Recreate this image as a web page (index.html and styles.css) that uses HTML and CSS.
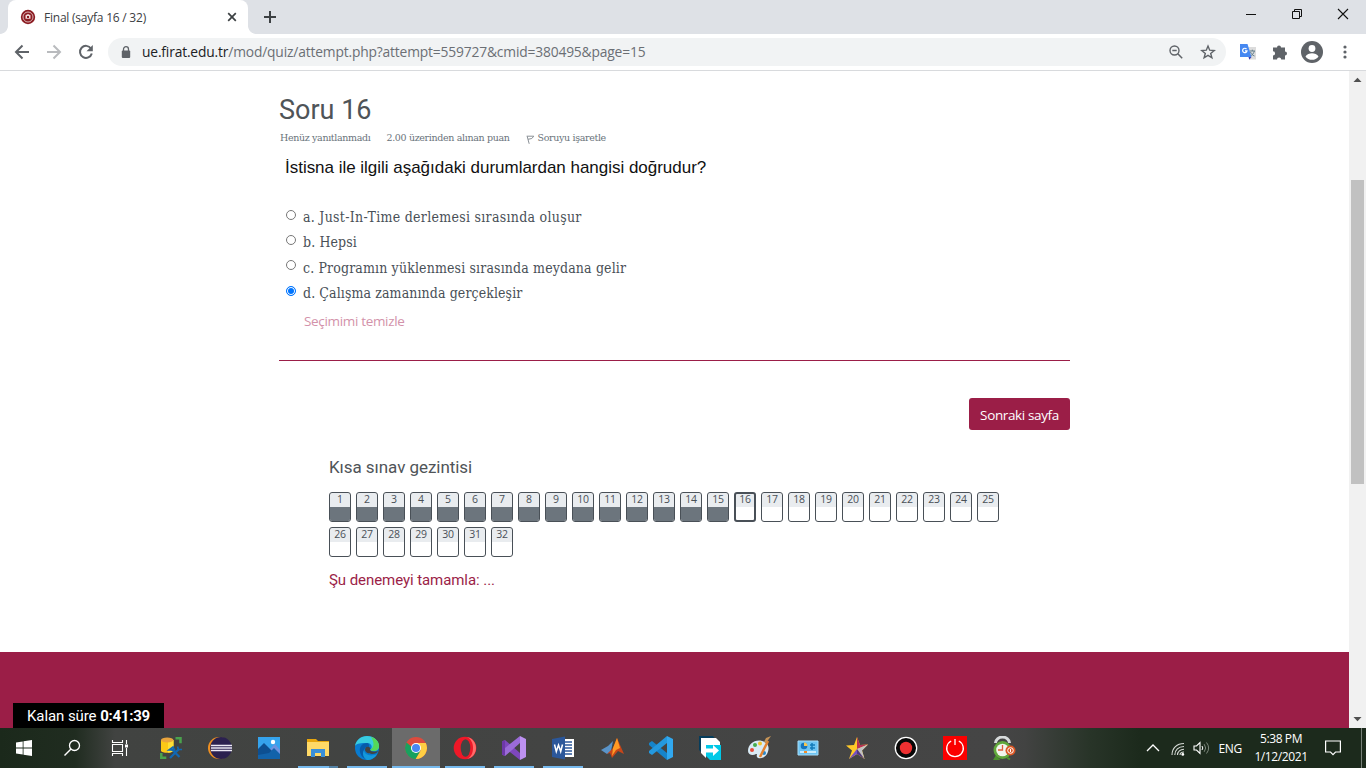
FILE: index.html
```html
<!DOCTYPE html>
<html lang="tr">
<head>
<meta charset="utf-8">
<title>Final (sayfa 16 / 32)</title>
<link rel="stylesheet" href="styles.css">
</head>
<body>
<div class="desktop">
  <header class="tabstrip">
    <div class="tab">
      <svg class="favicon" width="16" height="16" viewBox="0 0 16 16"><circle cx="8" cy="8" r="7.200" fill="#8c1c22"/><circle cx="8" cy="8" r="5" fill="none" stroke="#d9b4b6" stroke-width="1"/><path d="M5.500 6.200L8 5l2.500 1.200v3.500h-5z" fill="#f0dada"/><path d="M7 7h2v2H7z" fill="#8c1c22"/></svg>
      <span class="tab-title">Final (sayfa 16 / 32)</span>
      <svg class="tab-close" width="10" height="10" viewBox="0 0 10 10"><path d="M1.200 1.200l7.600 7.600M8.800 1.200l-7.600 7.600" stroke="#3c4043" stroke-width="1.700"/></svg>
    </div>
    <svg class="new-tab" width="12" height="12" viewBox="0 0 12 12"><path d="M6 0v12M0 6h12" stroke="#3c4043" stroke-width="2"/></svg>
    <div class="window-buttons">
      <svg width="46" height="28" viewBox="0 0 46 28"><path d="M18 14.500h10" stroke="#111"/></svg>
      <svg width="46" height="28" viewBox="0 0 46 28"><path d="M18.500 11.500h7v7h-7zM20.500 11.500v-2h7v7h-2" fill="none" stroke="#111"/></svg>
      <svg width="46" height="28" viewBox="0 0 46 28"><path d="M18 9l10 10M28 9L18 19" stroke="#111" stroke-width="1.100"/></svg>
    </div>
  </header>

  <div class="toolbar">
    <svg class="nav-icon" width="16" height="16" viewBox="0 0 16 16"><path d="M8.500 1.500L2 8l6.500 6.500M2 8h13" fill="none" stroke="#5f6368" stroke-width="2"/></svg>
    <svg class="nav-icon" width="16" height="16" viewBox="0 0 16 16"><path d="M7.500 1.500L14 8l-6.500 6.500M14 8H1" fill="none" stroke="#b9bbbe" stroke-width="2"/></svg>
    <svg class="nav-icon" width="16" height="16" viewBox="0 0 16 16"><path d="M13 4.500A6 6 0 1 0 13.800 9.500" fill="none" stroke="#5f6368" stroke-width="2"/><path d="M14.800 1v6.300H8.500z" fill="#5f6368"/></svg>
    <div class="omnibox">
      <svg width="10" height="12" viewBox="0 0 10 12"><path d="M2.500 5V3.200a2.500 2.500 0 0 1 5 0V5" fill="none" stroke="#5f6368" stroke-width="1.300"/><rect x=".8" y="4.500" width="8.400" height="7.500" rx="1" fill="#5f6368"/></svg>
      <span class="url"><b>ue.firat.edu.tr</b>/mod/quiz/attempt.php?attempt=559727&amp;cmid=380495&amp;page=15</span>
      <svg class="zoom-icon" width="14" height="14" viewBox="0 0 14 14"><circle cx="5.500" cy="5.500" r="4.500" fill="none" stroke="#5f6368" stroke-width="1.400"/><path d="M3.300 5.500h4.400M8.800 8.800l4.400 4.400" stroke="#5f6368" stroke-width="1.500"/></svg>
      <svg class="star-icon" width="16" height="16" viewBox="0 0 16 16"><path d="M8 2l1.700 4.200 4.500.300-3.500 2.900 1.200 4.400L8 11.400l-3.900 2.400 1.200-4.400-3.500-2.900 4.500-.300z" fill="none" stroke="#5f6368" stroke-width="1.400"/></svg>
    </div>
    <svg class="ext-translate" width="16" height="16" viewBox="0 0 16 16"><path d="M7 3h9v12.500h-6z" fill="#dcdcdc"/><path d="M9.500 7h5.500M12.300 5.700V7m2 0c-.6 2.500-2 4-4 5M10.500 8c.8 2 2 3.200 4 4" fill="none" stroke="#607d8b"/><path d="M0 0h7.500l4 13H0z" fill="#4688f1"/><path d="M8.500 13h3l-2.200 2.800z" fill="#3b3fb5"/><path d="M6.500 5A2.200 2.200 0 1 0 7 6.800H5" fill="none" stroke="#fff" stroke-width="1.200"/></svg>
    <svg class="ext-puzzle" width="16" height="16" viewBox="0 0 16 16"><path d="M1 3.500h4a2 2 0 1 1 4 0h4v4a2 2 0 1 1 0 4v4H9.200a2.100 2.100 0 0 0-4.200 0H1v-4a2.100 2.100 0 0 0 0-4.200z" fill="#5f6368"/></svg>
    <svg class="avatar" width="22" height="22" viewBox="0 0 22 22"><circle cx="11" cy="11" r="11" fill="#5f6368"/><circle cx="11" cy="7.500" r="3.400" fill="#fff"/><path d="M4.500 15.500c1.300-2.300 4-3.200 6.500-3.200s5.200.9 6.500 3.200a8 8 0 0 1-13 0z" fill="#fff"/></svg>
    <svg class="menu" width="4" height="14" viewBox="0 0 4 14"><g fill="#5f6368"><circle cx="2" cy="2" r="1.600"/><circle cx="2" cy="7" r="1.600"/><circle cx="2" cy="12" r="1.600"/></g></svg>
  </div>

  <div class="viewport">
    <main class="page">
      <section class="question">
        <h1 class="q-title">Soru 16</h1>
        <div class="q-info">
          <span class="state">Henüz yanıtlanmadı</span>
          <span class="grade">2.00 üzerinden alınan puan</span>
          <svg width="9" height="9" viewBox="0 0 9 9"><path d="M1 .800l2.200 8M1.200 1.200h6.600L5.800 3.500 2 4.300" fill="none" stroke="#8a9096"/></svg>
          <span class="flag">Soruyu işaretle</span>
        </div>
        <p class="q-text">İstisna ile ilgili aşağıdaki durumlardan hangisi doğrudur?</p>
        <div class="answers">
          <label class="answer"><i class="radio"></i><span class="a1">a. Just-In-Time derlemesi sırasında oluşur</span></label>
          <label class="answer"><i class="radio"></i><span class="a2">b. Hepsi</span></label>
          <label class="answer"><i class="radio"></i><span class="a3">c. Programın yüklenmesi sırasında meydana gelir</span></label>
          <label class="answer"><i class="radio checked"></i><span class="a4">d. Çalışma zamanında gerçekleşir</span></label>
        </div>
        <a class="clear">Seçimimi temizle</a>
      </section>
      <div class="actions"><button class="next">Sonraki sayfa</button></div>
      <nav class="quiz-nav">
        <h2 class="nav-title">Kısa sınav gezintisi</h2>
        <div class="cells">
          <a class="cell done">1</a><a class="cell done">2</a><a class="cell done">3</a><a class="cell done">4</a><a class="cell done">5</a><a class="cell done">6</a><a class="cell done">7</a><a class="cell done">8</a><a class="cell done">9</a><a class="cell done">10</a><a class="cell done">11</a><a class="cell done">12</a><a class="cell done">13</a><a class="cell done">14</a><a class="cell done">15</a><a class="cell current">16</a><a class="cell">17</a><a class="cell">18</a><a class="cell">19</a><a class="cell">20</a><a class="cell">21</a><a class="cell">22</a><a class="cell">23</a><a class="cell">24</a><a class="cell">25</a><a class="cell">26</a><a class="cell">27</a><a class="cell">28</a><a class="cell">29</a><a class="cell">30</a><a class="cell">31</a><a class="cell">32</a>
        </div>
        <a class="finish">Şu denemeyi tamamla: ...</a>
      </nav>
      <footer class="footer"><div class="timer">Kalan süre <b>0:41:39</b></div></footer>
    </main>
    <div class="scrollbar">
      <svg width="17" height="17" viewBox="0 0 17 17"><path d="M4.500 11h8L8.500 6.700z" fill="#505050"/></svg>
      <div class="thumb"></div>
      <svg width="17" height="17" viewBox="0 0 17 17"><path d="M4.500 6h8l-4 4.300z" fill="#505050"/></svg>
    </div>
  </div>

  <div class="taskbar">
    <div class="system">
      <svg width="16" height="16" viewBox="0 0 16 16"><path d="M0 2.400l6.700-1v6.200H0zM7.500 1.200L16 0v7.600H7.500zM0 8.400h6.700v6.200l-6.700-1zM7.500 8.400H16V16l-8.500-1.200z" fill="#fff"/></svg>
      <svg width="18" height="18" viewBox="0 0 18 18"><circle cx="11.500" cy="6.500" r="5" fill="none" stroke="#fff" stroke-width="1.300"/><path d="M8 10l-6.500 6.500" stroke="#fff" stroke-width="1.400"/></svg>
      <svg width="18" height="18" viewBox="0 0 18 18"><path d="M1.500 1v2.500h10V1M1.500 17v-2.500h10V17M1.500 5.500h10v7h-10zM15.500 1v4M15.500 9v8" fill="none" stroke="#fff" stroke-width="1.100"/><path d="M14 5.500h3v3h-3z" fill="#fff"/></svg>
    </div>
    <div class="apps">
      <div class="app"><svg width="24" height="24" viewBox="0 0 24 24"><path d="M2 4v11c1 2.300 10.500 2.500 12.500 0V4z" fill="#fbc816"/><path d="M9 4v12.500c3 0 5-.7 5.500-1.500V4z" fill="#ffdf35"/><ellipse cx="8.200" cy="4" rx="6.200" ry="2.500" fill="#e9a43d"/><path d="M16.500 2.300h5v5M2.300 17v4.700h5" fill="none" stroke="#4aa24d" stroke-width="2.500"/><path d="M12.500 13l8 8M11 22l9-9" stroke="#1168b3" stroke-width="2.200"/><path d="M10 14l4-3 1.500 3zM18.500 10.500l1 3 3.500 0" fill="none" stroke="#1168b3" stroke-width="1.700"/></svg></div>
      <div class="app"><svg width="24" height="24" viewBox="0 0 24 24"><circle cx="11" cy="12" r="11" fill="#ef9021"/><circle cx="13" cy="12" r="10.900" fill="#2b2150"/><path d="M3 9.500h21M3 12h21M3 14.500h21" stroke="#ece9f5" stroke-width="1.500"/></svg></div>
      <div class="app"><svg width="24" height="24" viewBox="0 0 24 24"><path d="M1 1h22v22H1z" fill="#35a3ed"/><path d="M12 14l6-6 5 6v8H12z" fill="#6e92df"/><path d="M1 13l6-6 16 16H1z" fill="#0d4f91"/><path d="M12 17l5-5 6 6v5H1v-4z" fill="#1262aa"/><circle cx="16" cy="6" r="2.200" fill="#fff"/></svg></div>
      <div class="app running grouped"><svg width="24" height="24" viewBox="0 0 24 24"><path d="M1 3h9l2 2h11v15H1z" fill="#e8a60d"/><path d="M1 6h22v14H1z" fill="#ffd967"/><path d="M5 13h14v8h-4v-4H9v4H5z" fill="#3a8fd8"/></svg></div>
      <div class="app running"><svg width="24" height="24" viewBox="0 0 24 24"><circle cx="12" cy="12" r="12" fill="#087bd0"/><path d="M0 10C1 4 6 0 12 0c7 0 12 5 12 10 0 5-5 6-9 4 3-2 2-7-3-7-6 0-10 0-12 3z" fill="#38cce0"/><path d="M16 1c5 1 8 5 8 9 0 5-5 6-9 4 5-3 4-8 1-13z" fill="#55d957"/><path d="M12 7c-5 0-8 4-7 9s5 8 10 7c-4-1-7-6-6-9s3-4 5-3c0-2 0-4-2-4z" fill="#075baa"/><path d="M9 14c0 5 7 7 13 4-2 4-6 6-10 6-4-2-5-7-3-10z" fill="#1499dc"/><path d="M10 14c0-3 2-4 4-3 2 1 1 2 1 3 1 2 5 2 8 1-1 4-12 4-13-1z" fill="#434343"/></svg></div>
      <div class="app active"><svg width="22" height="22" viewBox="0 0 22 22"><circle cx="11" cy="11" r="11" fill="#dd4b3e"/><path d="M1.500 5.500A11 11 0 0 0 10.700 22l5-8.500H11z" fill="#18a15f"/><path d="M11 6h9.800A11 11 0 0 1 10.700 22l5-8.500z" fill="#ffce43"/><circle cx="11" cy="11" r="5" fill="#fff"/><circle cx="11" cy="11" r="4" fill="#4988f2"/></svg></div>
      <div class="app running"><svg width="24" height="24" viewBox="0 0 24 24"><circle cx="12" cy="12" r="11.300" fill="#ef1828"/><path d="M14 1c5 1 9 5 9 11s-4 10-9 11c4-2 6-6 6-11s-2-9-6-11z" fill="#ff6b69"/><ellipse cx="12.500" cy="12" rx="4.800" ry="8.700" fill="#464342"/></svg></div>
      <div class="app running"><svg width="24" height="24" viewBox="0 0 24 24"><path d="M0 5.500L3 4l15 13v7L3 12v5l-3 1.500z" fill="#7e47bd"/><path d="M0 18.500l3 1.500L18 7V0L3 12v5z" fill="#9b6bd8"/><path d="M0 5.500L3 4v16l-3-1.500z" fill="#6d38a8"/><path d="M18 0l6 3v18l-6 3z" fill="#bd91f1"/></svg></div>
      <div class="app running"><svg width="24" height="24" viewBox="0 0 24 24"><path d="M11 3h12v18H11z" fill="#fff"/><path d="M14 6h7M14 9h7M14 12h7M14 15h7M14 18h7" stroke="#2b579a" stroke-width="1.300"/><path d="M1 3l13-2.500v23L1 21z" fill="#2b579a"/><path d="M3.500 8.500l1.800 7L7.500 9l2.200 6.500 1.800-7" fill="none" stroke="#fff" stroke-width="1.500"/></svg></div>
      <div class="app"><svg width="24" height="24" viewBox="0 0 24 24"><path d="M1 14l7-4 5-5-2 10-4 3z" fill="#5a94c9"/><path d="M7 18l6-6 4-10 7 16-6-3-6 7-2-5z" fill="#c74619"/><path d="M17 2l-4 10-1 8 4-6 4-2z" fill="#ff9b24"/></svg></div>
      <div class="app"><svg width="24" height="24" viewBox="0 0 24 24"><path d="M0 7l3-2 15 12v7L0 9z" fill="#1684ca"/><path d="M0 17l3 2L18 7V0L0 15z" fill="#2499df"/><path d="M18 0l6 3v18l-6 3z" fill="#31a8ef"/></svg></div>
      <div class="app"><svg width="24" height="24" viewBox="0 0 24 24"><path d="M1 0h14l3 4H5v14l-4-4z" fill="#063d5c"/><path d="M3 2h15l4 4v6H8v10l-5-5z" fill="#fff"/><path d="M8 9h15v15H12l-4-4z" fill="#00c8e7"/><path d="M8 12.500h7V9l6 5.500-6 5.500v-3.500H8z" fill="#fff"/></svg></div>
      <div class="app"><svg width="24" height="24" viewBox="0 0 24 24"><path d="M1 15C1 8 8 3 15 5s8 7 5 13c-3 5-9 5-10 3s1-3-1-3c-3 2-8 1-8-3z" fill="#d9ebf5"/><circle cx="5" cy="14" r="2" fill="#e74b38"/><circle cx="8" cy="9" r="2" fill="#45ad4c"/><circle cx="13" cy="7.500" r="2" fill="#f2c22b"/><circle cx="17" cy="17" r="2" fill="#2988ca"/><path d="M21 5l-8 16" stroke="#e48330" stroke-width="2.500"/><path d="M19 7l5-7-5 2-2 4z" fill="#c69457"/></svg></div>
      <div class="app"><svg width="24" height="24" viewBox="0 0 24 24"><path d="M2 5h20v14H2z" fill="#6dc4f3" stroke="#a5dcf8"/><circle cx="8" cy="10" r="3.300" fill="#1674bc"/><path d="M8 10V6.500a3.500 3.500 0 0 1 3.500 3.500z" fill="#f5c451"/><path d="M14 9h5M14 12h5M16 7v7" stroke="#147bb9" stroke-width="1.500"/><path d="M4 16h16" stroke="#e9faff" stroke-width="1.500"/><path d="M8 16h3" stroke="#f28c28" stroke-width="2"/></svg></div>
      <div class="app"><svg width="24" height="24" viewBox="0 0 24 24"><path d="M12 1l3 8 8-.5-6 6 2.500 8.500-7.500-5L4 23l3-8.500-6-5 8-.5z" fill="#ffc928"/><path d="M12 1l3 8 8-.5L12 13z" fill="#b83255"/><path d="M23 8.500l-6 6 2.500 8.500L12 13z" fill="#c1c1c5"/><path d="M4 23l8-10v5z" fill="#7550c2"/><path d="M12 13v5l7.500 5z" fill="#4c3785"/></svg></div>
      <div class="app"><svg width="24" height="24" viewBox="0 0 24 24"><circle cx="12" cy="12" r="10.700" fill="#080808" stroke="#fff" stroke-width="1.300"/><circle cx="12" cy="12" r="6.200" fill="#ee3031"/></svg></div>
      <div class="app"><svg width="24" height="24" viewBox="0 0 24 24"><path d="M0 0h24v24H0z" fill="#fb0000"/><path d="M8.200 5a8.300 8.300 0 1 0 7.600 0M12 3v6" fill="none" stroke="#fff" stroke-width="1.300"/></svg></div>
      <div class="app"><svg width="24" height="24" viewBox="0 0 24 24"><path d="M3.500 7a6.500 5.500 0 0 1 14 0" fill="none" stroke="#d7dadb" stroke-width="3"/><circle cx="10.500" cy="14" r="9" fill="#62a83b"/><circle cx="10.500" cy="14" r="6.300" fill="#f3f5ec"/><path d="M10.500 9v5H6" fill="none" stroke="#df5d3c" stroke-width="1.300"/><path d="M4 21l-1.500 2.500h4zM15 21.500l3 2" stroke="#4c912d" stroke-width="2"/><circle cx="18.500" cy="14.500" r="5" fill="#db5725"/><circle cx="18.500" cy="14.500" r="2.800" fill="none" stroke="#fff"/><path d="M18.500 13v3" stroke="#fff"/></svg></div>
    </div>
    <div class="tray">
      <svg class="chevron" width="14" height="8" viewBox="0 0 14 8"><path d="M1 7l6-6 6 6" fill="none" stroke="#fff" stroke-width="1.300"/></svg>
      <svg class="wifi" width="14" height="14" viewBox="0 0 14 14"><g fill="none" stroke="#d7dcd7" stroke-width="1.100"><path d="M1 13C1 6 6 1.500 13 1.500M3.800 13C3.800 8 7.500 4.500 13 4.500M6.500 13c0-3.200 2.700-5.700 6.500-5.700M9 13c0-1.800 1.500-3 4-3"/></g><circle cx="11.800" cy="12.400" r="1.400" fill="#fff"/></svg>
      <svg class="volume" width="17" height="14" viewBox="0 0 17 14"><path d="M1 5h2.500L7 1.500v11L3.500 9H1z" fill="none" stroke="#fff" stroke-width="1.100"/><path d="M9 5q1.600 2 0 4" fill="none" stroke="#fff"/><path d="M11.200 3.200q3 3.800 0 7.600M13.500 1.500q4.300 5.500 0 11" fill="none" stroke="#7c877c"/></svg>
      <span class="lang">ENG</span>
      <div class="clock"><span class="time">5:38 PM</span><span class="date">1/12/2021</span></div>
      <svg class="notify" width="16" height="16" viewBox="0 0 16 16"><path d="M.600 1h14.800v11H10.500L8 14.700 5.500 12H.600z" fill="none" stroke="#fff" stroke-width="1.200"/></svg>
      <div class="peek"></div>
    </div>
  </div>
</div>
</body>
</html>
```

FILE: styles.css
```css
* { box-sizing: border-box; }
body { margin: 0; overflow: hidden; font-family: "Open Sans", sans-serif; }
svg { display: block; flex: none; }
b { font-weight: inherit; }
span, a, label, h1, h2, p { white-space: nowrap; }

.desktop { width: 1366px; height: 768px; display: flex; flex-direction: column; background: #fff; }

/* Browser chrome */
.tabstrip { height: 34px; background: #dee1e6; display: flex; flex: none; padding-left: 8px; }
.tab { position: relative; width: 240px; height: 34px; background: #fff; border-radius: 8px 8px 0 0; display: flex; align-items: center; padding: 0 11px 0 12px; }
.tab-title { font-size: 12px; letter-spacing: -.23px; color: #3c4043; margin-left: 8px; flex: 1; }
.tab::before, .tab::after { content: ""; position: absolute; bottom: 0; width: 8px; height: 8px; }
.tab::before { left: -8px; background: radial-gradient(circle at 0 0, #dee1e6 7.500px, #fff 8.200px); }
.tab::after { right: -8px; background: radial-gradient(circle at 100% 0, #dee1e6 7.500px, #fff 8.200px); }
.new-tab { margin: 11px 0 0 16px; }
.window-buttons { display: flex; margin-left: auto; }

.toolbar { height: 37px; flex: none; display: flex; align-items: center; padding-left: 14px; border-bottom: 1px solid #d8dadd; }
.nav-icon { margin-right: 16px; }
.omnibox { width: 1118px; height: 28px; margin-left: -2px; border-radius: 14px; background: #f1f3f4; display: flex; align-items: center; padding: 0 10px 0 13px; }
.url { flex: 1; margin-left: 11px; font-size: 13.800px; letter-spacing: -.160px; color: #6b6f74; line-height: 20px; padding-bottom: 1px; }
.url b { color: #202124; }
.star-icon { margin-left: 17px; }
.ext-translate { margin-left: 14px; }
.ext-puzzle { margin-left: 16px; }
.avatar { margin-left: 13px; }
.menu { margin-left: 19.500px; }

/* Page */
.viewport { height: 657px; flex: none; display: flex; }
.page { width: 1349px; height: 657px; display: flex; flex-direction: column; }
.question { width: 791px; height: 290px; margin-left: 279px; border-bottom: 1px solid #9b1e47; flex: none; padding-top: 22px; }
.q-title { margin: 0; font: 400 27px/34px Roboto, sans-serif; color: #4f5458; }
.q-info { display: flex; align-items: center; height: 16px; margin-top: 3px; padding-left: 1px; font: 9.500px/16px "DejaVu Serif", serif; letter-spacing: -.350px; color: #6a737b; }
.grade { margin-left: 16px; }
.q-info svg { margin: 2px 3px 0 16px; }
.q-text { margin: 10px 0 0 6px; font: 17px/24px "Liberation Sans", sans-serif; letter-spacing: -.020px; color: #111; }
.answers { margin: 25px 0 0 7px; }
.answer { display: flex; height: 25.400px; }
.radio { width: 10px; height: 10px; margin: 4.500px 7px 0 0; border: 1px solid #777; border-radius: 50%; background: #fff; }
.radio.checked { border: 1px solid #0075ff; background: #0075ff; box-shadow: inset 0 0 0 1px #fff; }
.answer span { font: 14px/25px "DejaVu Serif Condensed", "DejaVu Serif", serif; color: #495057; }
.answer .a1 { letter-spacing: .290px; }
.answer .a2 { letter-spacing: .120px; }
.answer .a3 { letter-spacing: .140px; }
.answer .a4 { letter-spacing: .100px; }
.clear { display: block; margin: 2px 0 0 25px; font-size: 13.500px; letter-spacing: -.330px; line-height: 24px; color: #d392aa; }
.actions { width: 791px; margin: 37px 0 0 279px; display: flex; justify-content: flex-end; flex: none; }
.next { width: 101px; height: 32px; border: 0; border-radius: 3px; padding: 2px 0 0; background: #9b1e47; color: #fff; font: 13.500px/20px "Open Sans", sans-serif; letter-spacing: -.370px; white-space: nowrap; }
.quiz-nav { margin: 24px 0 0 329px; width: 675px; height: 198px; flex: none; }
.nav-title { margin: 0; font: 400 17px/26px Roboto, sans-serif; letter-spacing: -.050px; color: #4f5458; }
.cells { display: flex; flex-wrap: wrap; gap: 5px; margin-top: 12px; }
.cell { width: 22px; height: 30px; border: 1px solid #495057; border-radius: 3px; background: linear-gradient(#e9ecef 14px, #fff 14px) padding-box; text-align: center; font-size: 10.500px; letter-spacing: -.200px; line-height: 12px; color: #495057; }
.cell.done { background: linear-gradient(#e9ecef 14px, #6c757d 14px) padding-box; }
.cell.current { border-width: 2px; line-height: 10px; background: linear-gradient(#e9ecef 13px, #fff 13px) padding-box; }
.finish { display: block; margin-top: 12px; font: 15px/22px Roboto, sans-serif; letter-spacing: -.070px; color: #9b1e47; }
.footer { height: 76px; background: #9b1e47; display: flex; align-items: flex-end; margin-top: auto; padding-left: 13px; }
.timer { width: 151px; height: 25px; padding-left: 14px; background: #000; color: #fff; font: 15px/26px Roboto, sans-serif; letter-spacing: -.080px; white-space: nowrap; }
.timer b { font-weight: 700; letter-spacing: -.250px; }
.scrollbar { width: 17px; background: #f1f1f1; display: flex; flex-direction: column; }
.thumb { width: 13px; height: 304px; background: #c1c1c1; margin: 92px 2px auto; }

/* Taskbar */
.taskbar { height: 40px; flex: none; display: flex; background: linear-gradient(90deg, #1b291b 0, #202c20 75px, #414341 115px, #454545 1000px, #424342 1025px, #283428 1090px, #1c2a1c 1140px); }
.system { width: 147px; display: flex; }
.system svg { margin: 11px 15px; }
.system svg:first-child { margin: 12px 16px; }
.apps { display: flex; gap: 1px; }
.app { width: 48px; height: 40px; display: flex; align-items: center; justify-content: center; position: relative; }
.app.active { background: linear-gradient(#6b6b6b 38px, #76b9ed 38px); }
.app.running::after { content: ""; position: absolute; left: 4px; bottom: 0; width: 40px; height: 2px; background: #76b9ed; }
.app.grouped::after { background: linear-gradient(90deg, #76b9ed 31px, #5482a5 31px); }
.tray { margin-left: auto; display: flex; align-items: center; color: #fff; font-size: 12px; }
.wifi { margin: 2px 0 0 11px; }
.volume { margin-left: 8px; }
.lang { margin-left: 8px; letter-spacing: -.300px; }
.clock { width: 62px; margin-left: 8px; display: flex; flex-direction: column; align-items: center; line-height: 18px; letter-spacing: -.400px; padding-bottom: 1px; }
.notify { margin-left: 13px; }
.peek { width: 5px; height: 40px; margin: 0 4px 0 16px; border-right: 1px solid #778078; }
```
